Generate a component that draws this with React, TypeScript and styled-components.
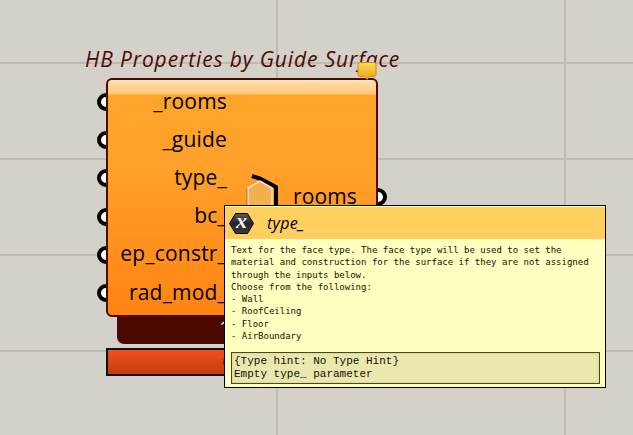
import React from "react"
import styled, { createGlobalStyle } from "styled-components"

const Global = createGlobalStyle`
  html, body {
    margin: 0;
    padding: 0;
    background: #d4d0ca;
  }
`

const Canvas = styled.div`
  position: relative;
  width: 633px;
  height: 435px;
  overflow: hidden;
  font-family: "Open Sans", "Liberation Sans", sans-serif;
  background-color: #d4d0ca;
  background-image:
    linear-gradient(#bfbbb3, #bfbbb3),
    linear-gradient(#bfbbb3, #bfbbb3),
    linear-gradient(#bfbbb3, #bfbbb3),
    linear-gradient(#bfbbb3, #bfbbb3),
    linear-gradient(#bfbbb3, #bfbbb3),
    linear-gradient(#bfbbb3, #bfbbb3);
  background-repeat: no-repeat;
  background-size: 100% 2px, 100% 2px, 100% 2px, 100% 2px, 2px 100%, 2px 100%;
  background-position: 0 62px, 0 158px, 0 254px, 0 350px, 276px 0, 564px 0;
`

const Component = styled.div`
  position: absolute;
  left: 85px;
  top: 46px;
  width: 320px;
`

const Title = styled.div`
  font-size: 21px;
  font-style: italic;
  line-height: 26px;
  letter-spacing: 0.88px;
  color: #4d0a00;
  white-space: nowrap;
`

const Balloon = styled.svg`
  position: absolute;
  left: 272px;
  top: 16px;
  z-index: 3;
`

const Body = styled.div`
  position: relative;
  z-index: 1;
  box-sizing: border-box;
  margin: 6px 0 0 21px;
  width: 272px;
  height: 239px;
  padding: 5px 2px 0;
  display: grid;
  grid-template-columns: 119px 1fr;

  &::before {
    content: '';
    position: absolute;
    inset: 0;
    z-index: -1;
    border: 2px solid #4d0a00;
    border-radius: 6px;
    background: linear-gradient(#ffe6c4 0, #ffdca8 2px, #ffc777 14px, #ffa52c 15px, #ffa02a 40%, #ff8312 100%);
  }
`

const Inputs = styled.div`
  display: flex;
  flex-direction: column;
`

const InputRow = styled.div`
  box-sizing: border-box;
  height: 38.2px;
  padding-bottom: 3px;
  display: flex;
  align-items: center;
  justify-content: flex-end;
  position: relative;
  font-size: 21px;
  letter-spacing: 0.2px;
  color: #000;
  white-space: nowrap;
`

const Port = styled.span<{ $side: "left" | "right" }>`
  position: absolute;
  ${({ $side }) => ($side === "left" ? "left: -11px;" : "right: -11px;")}
  top: 50%;
  width: 18px;
  height: 18px;
  box-sizing: border-box;
  border: 4px solid #000;
  border-radius: 50%;
  background: #fff;
  transform: translateY(-50%);
  z-index: -2;
`

const Output = styled.div`
  position: relative;
  display: flex;
  align-items: center;
  height: 38px;
  margin-top: 95px;
  padding-left: 19px;
  gap: 13px;
  font-size: 21px;
  letter-spacing: 0.1px;
  color: #000;
`

const OutputLabel = styled.span`
  position: relative;
  top: -1px;
`

const Footer = styled.div`
  box-sizing: border-box;
  margin-left: 32px;
  width: 250px;
  height: 27px;
  padding-left: 102px;
  background: #4a0800;
  border-radius: 0 0 7px 7px;
  color: #f2e4da;
  font-size: 20px;
  line-height: 21px;
`

const RedBar = styled.div`
  box-sizing: border-box;
  margin: 4px 0 0 21px;
  width: 272px;
  height: 28px;
  padding-left: 114px;
  border: 2px solid #111;
  background: linear-gradient(#f2501c, #c53a10);
  color: #111;
  font-size: 20px;
  line-height: 24px;
`

const Tooltip = styled.div`
  position: absolute;
  left: 224px;
  top: 205px;
  z-index: 4;
  box-sizing: border-box;
  width: 382px;
  height: 183px;
  border: 1px solid #000;
  padding: 1px;
  background: #ffffc0;
  display: flex;
  flex-direction: column;
`

const TooltipHeader = styled.div`
  height: 32px;
  flex: none;
  margin: 0 -1px;
  padding: 0 0 0 4px;
  display: flex;
  align-items: center;
  gap: 13px;
  background: #ffd060;
  font-size: 16px;
  letter-spacing: 0.3px;
  font-style: italic;
  color: #000;
`

const TypeBadge = styled.div`
  position: relative;
  width: 25px;
  height: 21px;
  display: flex;
  align-items: center;
  justify-content: center;
  font-family: "Liberation Serif", serif;
  font-size: 22px;
  font-weight: bold;
  color: #f4f4f4;
  line-height: 16px;
  letter-spacing: 0;
`

const BadgeShape = styled.svg`
  position: absolute;
  inset: 0;
`

const BadgeLetter = styled.span`
  position: relative;
  top: -2px;
`

const Description = styled.div`
  flex: 1;
  padding: 5px 0 0 5px;
  font-family: "DejaVu Sans Mono", "Liberation Mono", monospace;
  font-size: 9px;
  line-height: 12.3px;
  color: #10140a;
  white-space: pre;
`

const Hint = styled.div`
  box-sizing: border-box;
  height: 32px;
  margin: 0 4px 2px 5px;
  padding: 2px 0 0 2px;
  border: 1px solid #4f4519;
  box-shadow: inset 0 0 3px #c9c88e;
  background: #e9e8ae;
  font-family: "Liberation Mono", monospace;
  font-size: 11px;
  line-height: 13px;
  color: #141104;
  white-space: pre;
`

const inputs = ["_rooms", "_guide", "type_", "bc_", "ep_constr_", "rad_mod_"]

const description = `Text for the face type. The face type will be used to set the
material and construction for the surface if they are not assigned
through the inputs below.
Choose from the following:
- Wall
- RoofCeiling
- Floor
- AirBoundary`

const HexIcon = () => (
  <svg width="34" height="46" viewBox="0 0 34 46">
    <path d="M6 2 L15 5 L30 13 V46" fill="none" stroke="#000" strokeWidth="4" strokeLinejoin="round" />
    <path d="M14 7 L26 14 V46 H2 V14 Z" fill="#f2b04e" stroke="#fff" strokeWidth="1.5" strokeOpacity=".75" />
    <path d="M1 14 V46" stroke="#6b4a10" strokeOpacity=".5" />
  </svg>
)

export default function App() {
  return (
    <Canvas>
      <Global />
      <Component>
        <Title>HB Properties by Guide Surface</Title>
        <Balloon width="20" height="18" viewBox="0 0 20 18">
          <defs>
            <linearGradient id="balloon" x1="0" y1="0" x2="0" y2="1">
              <stop offset="0" stopColor="#ffd85a" />
              <stop offset="1" stopColor="#eda30e" />
            </linearGradient>
          </defs>
          <path
            d="M3 .5 H17 Q19 .5 19 2.5 V12.5 Q19 14.5 17 14.5 H12.5 L10 17.5 L7.5 14.5 H3 Q1 14.5 1 12.5 V2.5 Q1 .5 3 .5 Z"
            fill="url(#balloon)"
            stroke="#c7920f"
          />
        </Balloon>
        <Body>
          <Inputs>
            {inputs.map((name) => (
              <InputRow key={name}>
                <Port $side="left" />
                {name}
              </InputRow>
            ))}
          </Inputs>
          <div>
            <Output>
              <HexIcon />
              <OutputLabel>rooms</OutputLabel>
              <Port $side="right" />
            </Output>
          </div>
        </Body>
        <Footer>1</Footer>
        <RedBar>C</RedBar>
      </Component>
      <Tooltip>
        <TooltipHeader>
          <TypeBadge>
            <BadgeShape width="25" height="21" viewBox="0 0 25 21">
              <defs>
                <linearGradient id="badge" x1="0" y1="0" x2="0" y2="1">
                  <stop offset="0" stopColor="#5a5a5a" />
                  <stop offset="0.5" stopColor="#262626" />
                  <stop offset="1" stopColor="#3c3c3c" />
                </linearGradient>
              </defs>
              <path d="M6.5 .5 H18.5 L24.5 10.5 L18.5 20.5 H6.5 L.5 10.5 Z" fill="url(#badge)" stroke="#000" />
            </BadgeShape>
            <BadgeLetter>x</BadgeLetter>
          </TypeBadge>
          type_
        </TooltipHeader>
        <Description>{description}</Description>
        <Hint>{"{Type hint: No Type Hint}\nEmpty type_ parameter"}</Hint>
      </Tooltip>
    </Canvas>
  )
}
